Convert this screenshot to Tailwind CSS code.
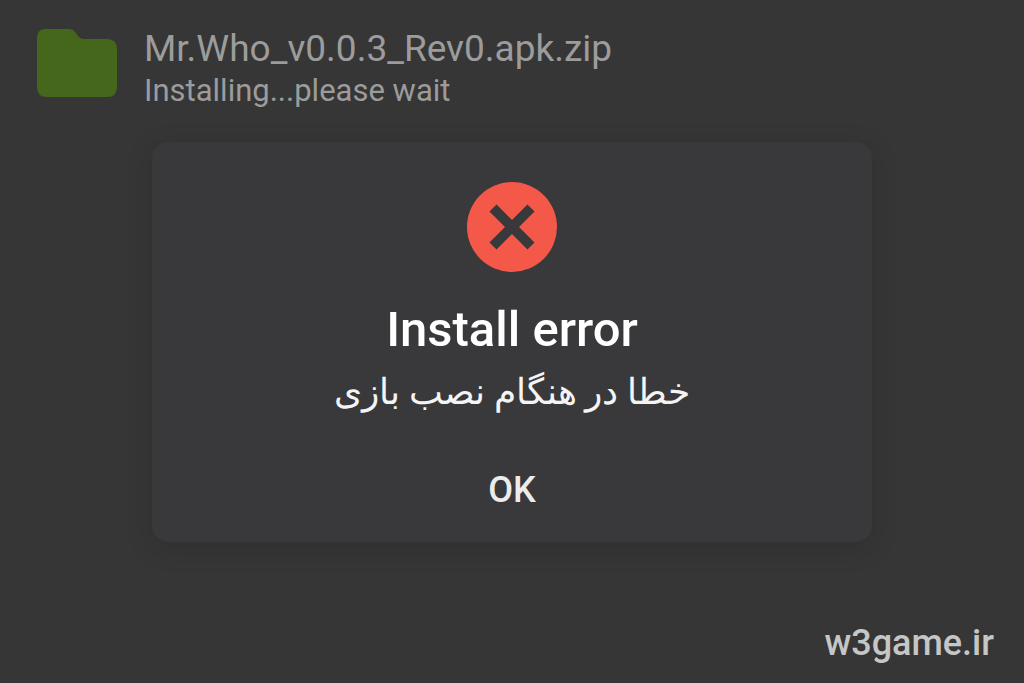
<!DOCTYPE html>
<html lang="en">
<head>
    <meta charset="UTF-8">
    <meta name="viewport" content="width=device-width, initial-scale=1.0">
    <title>Install error</title>
    <script src="https://cdn.jsdelivr.net/npm/@tailwindcss/browser@4"></script>
</head>
<body class="relative min-h-screen flex flex-col justify-between bg-[#363636] font-[Roboto,sans-serif]">

    <!-- File being installed -->
    <header class="flex items-start gap-[26px] px-9 pt-7">
        <svg class="w-[82px] h-[70px] shrink-0" viewBox="0 0 82 70" fill="#44671b" aria-hidden="true">
            <path d="M10 1H33Q37 1 39 4L42 8Q44 11 48 11H71Q81 11 81 21V59Q81 69 71 69H11Q1 69 1 59V10Q1 1 10 1Z"/>
        </svg>
        <div class="text-[#9c9c9c]">
            <h1 class="text-[37px] leading-[42px]">Mr.Who_v0.0.3_Rev0.apk.zip</h1>
            <p class="text-[31px] leading-[42px]">Installing...please wait</p>
        </div>
    </header>

    <!-- Error dialog -->
    <div class="absolute inset-0 flex items-center justify-center">
        <div role="alertdialog" aria-labelledby="errorTitle" aria-describedby="errorText"
        class="w-[720px] max-w-full flex flex-col items-center rounded-2xl bg-[#39393b] pt-10 pb-[22px] shadow-[0_6px_28px_rgba(0,0,0,0.14)]">
            <svg class="size-[90px]" viewBox="0 0 90 90" aria-hidden="true">
                <circle cx="45" cy="45" r="45" fill="#f35848"/>
                <path d="M26 26L64 64M64 26L26 64" stroke="#39393b" stroke-width="10"/>
            </svg>
            <h2 id="errorTitle" class="mt-7 text-[49px] leading-[60px] font-medium text-white">Install error</h2>
            <p id="errorText" lang="fa" dir="rtl" class="text-4xl leading-[64px] text-[#f4f4f4]">خطا در هنگام نصب بازی</p>
            <button type="button" class="mt-9 px-6 text-4xl leading-[60px] font-medium text-[#ececec]">OK</button>
        </div>
    </div>

    <footer class="px-[30px] pb-4 text-right text-4xl leading-[48px] font-medium text-[#c6c6c6]">w3game.ir</footer>

</body>
</html>
